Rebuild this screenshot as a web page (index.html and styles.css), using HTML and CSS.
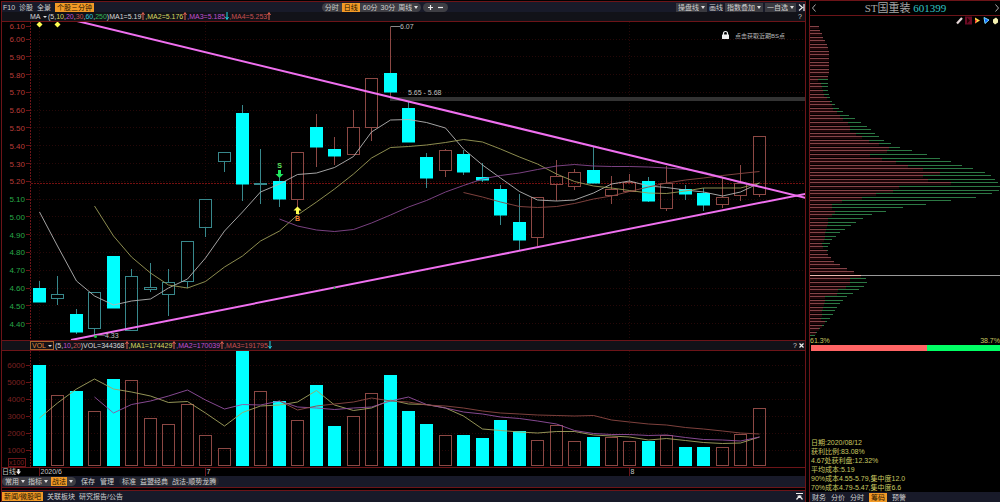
FILE: index.html
```html
<!DOCTYPE html>
<html lang="zh-CN">
<head>
<meta charset="utf-8">
<meta name="viewport" content="width=device-width, initial-scale=1">
<title>ST国重装 601399</title>
<link rel="stylesheet" href="styles.css">
</head>
<body>
<div class="app">
  <main class="panel">
    <nav class="bar top-bar">
      <div class="group links">
        <button class="flat">F10</button>
        <button class="flat">诊股</button>
        <button class="flat">全景</button>
        <button class="tag">个股三分钟</button>
      </div>
      <div class="group center">
        <div class="pill">
          <button class="flat">分时</button>
          <button class="tag">日线</button>
          <button class="flat">60分</button>
          <button class="flat">30分</button>
          <span class="drop"><select aria-label="周期"><option>周线</option></select></span>
        </div>
        <div class="pill zoom">
          <button class="flat" aria-label="放大"><svg class="sign" viewBox="0 0 5 5"><path d="M0 2.5H5M2.5 0V5"/></svg></button>
          <button class="flat" aria-label="缩小"><svg class="sign" viewBox="0 0 5 5"><path d="M0 2.5H5"/></svg></button>
        </div>
      </div>
      <div class="group tools">
        <span class="drop boxed"><select aria-label="操盘线"><option>操盘线</option></select></span>
        <button class="flat">画线</button>
        <span class="drop boxed"><select aria-label="指数叠加"><option>指数叠加</option></select></span>
        <span class="drop boxed"><select aria-label="自选"><option>一自选</option></select></span>
        <button class="flat" aria-label="收起"><svg class="skip" viewBox="0 0 7 7"><path d="M1 .5L4.500 3.500L1 6.500M6 0V7"/></svg></button>
      </div>
    </nav>
    <div class="bar legend">
      <div class="group values">
        <span class="drop white"><select aria-label="均线"><option>MA</option></select></span>
        <span class="white">(5,<i class="yellow">10</i>,<i class="purple">20</i>,<i class="red">30</i>,<i class="cyan">60</i>,<i class="green">250</i>)</span>
        <span class="white">MA1=5.19<svg class="arrow up" viewBox="0 0 4 8"><path d="M2 8V1M.5 3L2 .5L3.500 3"/></svg></span>
        <span class="yellow">,MA2=5.176<svg class="arrow up" viewBox="0 0 4 8"><path d="M2 8V1M.5 3L2 .5L3.500 3"/></svg></span>
        <span class="purple">,MA3=5.185<svg class="arrow down" viewBox="0 0 4 8"><path d="M2 0V7M.5 5L2 7.500L3.500 5"/></svg></span>
        <span class="red">,MA4=5.253<svg class="arrow up" viewBox="0 0 4 8"><path d="M2 8V1M.5 3L2 .5L3.500 3"/></svg></span>
      </div>
      <button class="flat help">?</button>
    </div>
    <svg class="chart" id="price" viewBox="2 22 803 318" role="img" aria-label="日K线图"></svg>
    <div class="bar legend volume-legend">
      <div class="group values">
        <span class="drop indicator"><select aria-label="副图指标"><option>VOL</option></select></span>
        <span class="white">(5,<i class="purple">10</i>,<i class="red">20</i>)</span>
        <span class="white">VOL=344368<svg class="arrow up" viewBox="0 0 4 8"><path d="M2 8V1M.5 3L2 .5L3.500 3"/></svg></span>
        <span class="yellow">,MA1=174429<svg class="arrow up" viewBox="0 0 4 8"><path d="M2 8V1M.5 3L2 .5L3.500 3"/></svg></span>
        <span class="purple">,MA2=170039<svg class="arrow up" viewBox="0 0 4 8"><path d="M2 8V1M.5 3L2 .5L3.500 3"/></svg></span>
        <span class="red">,MA3=191795<svg class="arrow down" viewBox="0 0 4 8"><path d="M2 0V7M.5 5L2 7.500L3.500 5"/></svg></span>
      </div>
      <div class="group">
        <button class="flat help">?</button>
        <button class="flat" aria-label="关闭"><svg class="sign" viewBox="0 0 5 5"><path d="M.5 .5L4.500 4.500M4.500 .5L.5 4.500"/></svg></button>
      </div>
    </div>
    <svg class="chart" id="volume" viewBox="2 351 803 125" role="img" aria-label="成交量"></svg>
    <div class="bar bottom-bar">
      <div class="pill">
        <span class="drop"><select aria-label="常用"><option>常用</option></select></span>
        <span class="drop"><select aria-label="指标"><option>指标</option></select></span>
        <span class="drop tagged"><select aria-label="战法"><option>战法</option></select></span>
      </div>
      <button class="flat">保存</button>
      <button class="flat">管理</button>
      <div class="pill outline">
        <button class="flat">标准</button>
        <button class="flat">益盟经典</button>
        <button class="flat">战法-顺势龙腾</button>
      </div>
    </div>
    <div class="bar news-bar">
      <div class="group">
        <button class="tag">新闻/微股吧</button>
        <button class="flat">关联板块</button>
        <button class="flat">研究报告/公告</button>
      </div>
      <button class="flat" aria-label="展开"><svg class="skip" viewBox="0 0 7 7"><path d="M0 .5H7M.5 6.500L3.500 3L6.500 6.500M3.500 3H1.500M3.500 3H5.500"/></svg></button>
    </div>
  </main>

  <aside class="side">
    <header class="side-head">
      <button class="flat" aria-label="上一只"><svg class="chevron" viewBox="0 0 4 8"><path d="M3.500 .5L.5 4L3.500 7.500"/></svg></button>
      <h1 class="stock">ST国重装 <span class="code">601399</span></h1>
      <button class="flat" aria-label="下一只"><svg class="chevron" viewBox="0 0 4 8"><path d="M.5 .5L3.500 4L.5 7.500"/></svg></button>
    </header>
    <div class="side-tools">
      <svg viewBox="0 0 7 8"><path d="M1 7L6 1.500" stroke="#e8d8d8" stroke-width="2.200"/></svg>
      <svg viewBox="0 0 7 8"><path d="M0 0H7V8H0z" fill="#6a0a24"/><path d="M2 1V7L5 4z" fill="#200"/></svg>
      <svg viewBox="0 0 7 8"><path d="M1 1L6 4L1 7z" fill="#ffd84a"/><path d="M1 3L3 4L1 7z" fill="#f33"/></svg>
      <svg viewBox="0 0 7 8"><path d="M1 1L6 3.500L2 7z" fill="#16f" stroke="#7df"/></svg>
      <svg viewBox="0 0 7 8"><path d="M1 3L4 1L6 3V6L3 8L1 6z" fill="#f4f0b0"/></svg>
    </div>
    <svg class="chart" id="chips" viewBox="810 25 190 312" role="img" aria-label="筹码分布"></svg>
    <div class="ratio-text"><span>61.3%</span><span>38.7%</span></div>
    <div class="ratio"><div class="ratio-red"></div><div class="ratio-green"></div></div>
    <div class="stats">
      <p>日期:2020/08/12</p>
      <p>获利比例:83.08%</p>
      <p>4.67处获利盘:12.32%</p>
      <p>平均成本:5.19</p>
      <p>90%成本4.55-5.79,集中度12.0</p>
      <p>70%成本4.79-5.47,集中度6.6</p>
    </div>
    <nav class="bar side-tabs">
      <button class="flat">财务</button>
      <button class="flat">分价</button>
      <button class="flat">分时</button>
      <button class="tag">筹码</button>
      <button class="flat">预警</button>
    </nav>
  </aside>
</div>
<script src="charts.js"></script>
</body>
</html>
```
FILE: styles.css
```css
* { box-sizing: border-box; }

body {
  margin: 0;
  background: #000;
  color: #d0d0d0;
  font-family: "Liberation Sans", "Noto Sans CJK SC", sans-serif;
  font-size: 7px;
  line-height: 9px;
}

button, select {
  margin: 0;
  padding: 0;
  border: 0;
  border-radius: 0;
  background: none;
  color: inherit;
  font: inherit;
  white-space: nowrap;
}

select { appearance: none; }
option { color: #000; }
i { font-style: normal; }
svg { display: block; }

.app {
  display: grid;
  grid-template-columns: minmax(0, 1fr) 191px;
  column-gap: 3px;
  min-height: 100vh;
  padding-left: 1px;
}

.panel {
  display: flex;
  flex-direction: column;
  margin-top: 1px;
  border: 1px solid #6c1418;
  border-bottom: 0;
}

.chart { width: 100%; height: auto; }

.bar {
  display: flex;
  align-items: center;
  justify-content: space-between;
  background: #181a29;
}

.group { display: flex; align-items: center; }
.top-bar { height: 10px; }
.links { gap: 4px; padding-left: 1px; }
.center { gap: 2px; }
.tools { gap: 2px; }

.tag {
  padding: 0 2px;
  background: #f29a26;
  color: #241200;
}

.pill {
  display: flex;
  align-items: center;
  gap: 3px;
  padding: 0 3px;
  border-radius: 5px;
  background: #3e3e44;
}

.zoom { gap: 5px; height: 9px; padding: 0 5px; }
.outline { background: #24262f; border-radius: 5px; gap: 4px; }

.drop { display: inline-flex; align-items: center; gap: 2px; }
.drop::after {
  content: "";
  border: 2px solid transparent;
  border-top: 3px solid #ddd;
  border-bottom: 0;
}
.boxed { padding: 0 2px; background: #3a3a40; }
.tagged select { padding: 0 1px; background: #f29a26; color: #241200; }

.sign { width: 5px; height: 5px; fill: none; stroke: #eee; stroke-width: 1.2; }
.skip { width: 7px; height: 7px; fill: none; stroke: #eee; stroke-width: 1.2; }
.chevron { width: 4px; height: 8px; fill: none; stroke: #aaa; }
.arrow { display: inline-block; width: 4px; height: 8px; fill: none; vertical-align: -1px; }
.up { stroke: #e06050; }
.down { stroke: #20d8e8; }

.legend {
  height: 10px;
  padding: 0 1px 0 28px;
  border-bottom: 1px solid #6c1418;
  background: #121218;
}
.volume-legend { height: 11px; border-top: 1px solid #6c1418; }
.values { white-space: nowrap; }
.values .drop { margin-right: 1px; }
.values .drop::after { border-top-width: 2px; }
.help { margin-right: 2px; }
.indicator { gap: 1px; padding: 0 1px; border: 1px solid #a8642c; color: #e08a3a; line-height: 7px; }

.white { color: #d8d8d8; }
.yellow { color: #d8d860; }
.purple { color: #c050d0; }
.red { color: #c85050; }
.cyan { color: #30c8d8; }
.green { color: #30b858; }

.bottom-bar {
  height: 12px;
  justify-content: flex-start;
  gap: 5px;
  padding-bottom: 1px;
  border-bottom: 1px solid #6c1418;
}

.news-bar {
  flex: 1;
  margin-top: 2px;
  padding-right: 2px;
  border-top: 1px solid #6c1418;
}
.news-bar .group { gap: 4px; }

.side {
  display: flex;
  flex-direction: column;
  border-top: 1px solid #6c1418;
  border-left: 1px solid #6c1418;
}

.side-head {
  display: flex;
  align-items: center;
  justify-content: space-between;
  height: 15px;
  padding: 0 1px 0 2px;
  border-bottom: 1px solid #6c1418;
}

.stock {
  margin: 0;
  color: #a8a8a8;
  font: 11px/14px "Liberation Serif", "Noto Sans CJK SC", serif;
}
.code { color: #30c4c4; }

.side-tools {
  display: flex;
  justify-content: flex-end;
  gap: 2px;
  padding-right: 1px;
}
.side-tools svg { width: 7px; height: 9px; fill: none; }

.ratio-text {
  display: flex;
  justify-content: space-between;
  line-height: 7px;
  color: #c8c860;
}

.ratio { display: flex; height: 6px; margin: 1px 0 0 1px; }
.ratio-red { flex: 613; background: #ff6464; }
.ratio-green { flex: 387; background: #00ff64; }

.stats { margin: auto 0 0 1px; color: #c8c860; white-space: nowrap; }
.stats p { margin: 0; }

.side-tabs {
  justify-content: flex-start;
  gap: 5px;
  height: 10px;
  padding-left: 2px;
}

.num { font: 8px "Liberation Sans", sans-serif; text-anchor: end; }
.axis-red { fill: #b83c38; }
.axis-green { fill: #28a848; }
.axis-dark { fill: #7c2020; }
.unit { fill: #7c2020; font-size: 7px; }
.note { fill: #c0c0c0; font-size: 7px; }
.hint { fill: #b8b8b8; font-size: 6px; }
.date { fill: #c8c8c8; font-size: 7px; }
.mark { font-size: 7px; font-weight: bold; text-anchor: middle; }
```
FILE: charts.js
```js
const NS = "http://www.w3.org/2000/svg";
const price = document.getElementById("price");
const volume = document.getElementById("volume");
const chips = document.getElementById("chips");

function add(svg, name, attrs, text) {
  const el = document.createElementNS(NS, name);
  for (const key in attrs) el.setAttribute(key, attrs[key]);
  if (text) el.textContent = text;
  svg.append(el);
  return el;
}

const line = (svg, x1, y1, x2, y2, stroke, extra) =>
  add(svg, "line", { x1, y1, x2, y2, stroke, ...extra });
const rect = (svg, x, y, width, height, attrs) =>
  add(svg, "rect", { x, y, width, height, ...attrs });
const center = i => Math.round(39 + i * 18.45) + 0.5;
const curve = (svg, start, ys, stroke) =>
  add(svg, "polyline", {
    points: ys.map((y, k) => center(start + k) + "," + y).join(" "),
    fill: "none", stroke, "stroke-width": 0.9
  });

const CYAN = "#00ffff", TEAL = "#38888c", RED = "#8c4844", AXIS = "#6c1418", GRID = "#260808";
const crisp = { "shape-rendering": "crispEdges" };
const dots = { "stroke-dasharray": "1 2", ...crisp };

/* price axis and grid */
line(price, 30.5, 22, 30.5, 340, AXIS, { "stroke-dasharray": "2 1", ...crisp });
for (let k = 0; k <= 17; k++) {
  const p = 6.1 - k * 0.1;
  const y = k === 0 ? 26 : 39 + (k - 1) * 17.79;
  add(price, "text", { x: 25, y: y + 3, class: "num " + (p > 5.15 ? "axis-red" : "axis-green") }, p.toFixed(2));
  line(price, 26, y, 30, y, AXIS, crisp);
  if (k) line(price, 31, y, 805, y, GRID, dots);
}
for (const x of [39.5, 205.5, 629.5]) {
  line(price, x, 22, x, 340, GRID, dots);
  line(volume, x, 351, x, 467, GRID, dots);
}
line(price, 31, 183.5, 805, 183.5, "#741010", { "stroke-dasharray": "2 1", ...crisp });

/* price gap band */
rect(price, 390, 97, 415, 4, { fill: "#333" });

/* candles: kind, body top, body bottom, high, low */
const candles = [
  ["f",288,302,281,302],["c",294,298,276,305],["f",314,332,309,334],["c",292,328,292,337],
  ["f",256,308,256,308],["c",276,330,269,331],["c",287,289,263,292],["c",282,294,269,316],
  ["c",241,281,241,288],["c",199,227,199,237],["c",152,161,152,172],["f",113,184,105,201],
  ["c",183,184,149,204],["f",181,199,177,207],["r",152,199,152,210],["m",127,147,114,167],
  ["m",149,156,137,165],["r",127,154,110,154],["r",78,127,78,141],["m",73,92,27,97],
  ["f",108,142,102,142],["f",157,178,153,188],["r",150,170,149,177],["f",154,172,150,175],
  ["f",177,180,163,182],["f",189,215,185,225],["f",222,240,194,250],["r",197,237,197,246],
  ["r",176,184,160,201],["r",172,186,169,190],["f",170,183,147,183],["r",189,195,176,204],
  ["r",182,191,174,192],["f",181,201,177,202],["r",183,208,166,211],["f",189,194,185,200],
  ["f",193,205,188,211],["r",197,204,178,208],["r",183,195,165,201],["r",136,194,136,197]
];
candles.forEach(([kind, top, bottom, high, low], i) => {
  const x = center(i);
  const color = kind === "r" || kind === "m" ? RED : TEAL;
  if (high < top) line(price, x, high, x, top, color, crisp);
  if (low > bottom) line(price, x, bottom, x, low, color, crisp);
  if (kind === "f" || kind === "m") rect(price, x - 6.5, top, 13, bottom - top + 0.5, { fill: CYAN });
  else rect(price, x - 6, top + 0.5, 12, bottom - top, { fill: "none", stroke: color });
});

/* moving averages */
curve(price, 0, [212,246,281,296,305,301,299,288,279,258,231,212,192,184,174.5,173,167.5,156.5,132,120,119.5,122.5,128,149,165,178,191.5,200,201,200,193,184,181,186,187.5,190,192,196,192,183], "#b4b4b4");
curve(price, 3, [206,236,257,273,285,288,281.5,267,256,241,231,215,202,189,174,158,147.5,146.5,145,142.5,139.5,142,149,157,164,174,181.5,186,188,190.5,193,193.5,191,188,188,188,183], "#9c9c58");
curve(price, 13, [219,226,230,231.5,229.5,223,215,207,200.5,192,185.5,179,175.5,173,169.5,166,164.5,166,166.5,166.5,167,168,169.5,172,177,183,187], "#884890");
curve(price, 23, [192.5,197,202,206.5,207.5,206.5,203.5,199,196,191.5,187,183,180,178,175.5,173.5,171.5], "#8c4844");

/* trend lines */
const TREND = { "stroke-width": 2 };
line(price, 77, 21, 806, 198, "#f070f0", TREND);
line(price, 71, 340, 806, 193.7, "#f070f0", TREND);

/* markers and notes */
for (const x of [39.5, 57.5]) add(price, "path", { d: `M${x} 21.500L${x + 3} 24.500L${x} 27.500L${x - 3} 24.500z`, fill: "#ffff50" });
line(price, 390.5, 26.5, 400, 26.5, "#888");
add(price, "text", { x: 400, y: 29, class: "note" }, "6.07");
add(price, "text", { x: 408, y: 95, class: "note" }, "5.65 - 5.68");
line(price, 96, 335.5, 105, 335.5, "#555");
add(price, "text", { x: 105, y: 338, class: "note" }, "4.33");
add(price, "circle", { cx: 95.5, cy: 336.5, r: 1.5, fill: "#20c040" });
add(price, "circle", { cx: 334.5, cy: 288, r: 1, fill: "#20c040" });
add(price, "text", { x: 279.5, y: 168, class: "mark", fill: "#60e860" }, "S");
add(price, "path", { d: "M278 170H281V174H283.500L279.500 178L275.500 174H278z", fill: "#20e860" });
add(price, "path", { d: "M296 214H299V210.500H301.500L297.500 206.500L293.500 210.500H296z", fill: "#ffff50" });
add(price, "text", { x: 297.5, y: 221, class: "mark", fill: "#f08030" }, "B");
add(price, "path", { d: "M723.500 35V33.500A2 2 0 0 1 727.500 33.500V35", fill: "none", stroke: "#eee", "stroke-width": 1.2 });
rect(price, 722, 34.5, 7, 4.5, { fill: "#eee", rx: 0.5 });
add(price, "text", { x: 735, y: 38, class: "hint" }, "点击获取近期BS点");

/* volume axis */
line(volume, 30.5, 351, 30.5, 467, AXIS, { "stroke-dasharray": "2 1", ...crisp });
for (let k = 0; k < 6; k++) {
  const y = 365 + k * 17;
  add(volume, "text", { x: 25, y: y + 3, class: "num axis-dark" }, String(6000 - k * 1000));
  line(volume, 26, y, 30, y, AXIS, crisp);
  line(volume, 31, y, 805, y, GRID, dots);
}
rect(volume, 8.5, 458.5, 17, 8, { fill: "none", stroke: AXIS });
add(volume, "text", { x: 9, y: 465, class: "unit" }, "x100");
line(volume, 2, 467.5, 805, 467.5, AXIS, crisp);

/* volume bars: top edge of each bar, "f" falling or "r" rising */
const tops = [365,395,391,411,379,380,418,424,404,435,448,350,391,401,420,385,426,416,393,375,411,424,435,435,438,420,431,440,425,441,437,437,441,441,435,447,447,447,434,408];
const kinds = "frfrfrrrrrrfrfrffrrfffrffffrrrfrrfrffrrr";
tops.forEach((top, i) => {
  const x = center(i);
  if (kinds[i] === "f") rect(volume, x - 6.5, top, 13, 466 - top, { fill: CYAN });
  else rect(volume, x - 6, top + 0.5, 12, 465 - top, { fill: "none", stroke: RED });
});
curve(volume, 0, [418,403,389,379,389,392,396,402.5,401.5,413,426,412.5,406,405,402,390.5,405,410.5,408,400,404,404.5,408,416,429,430.5,432,433,431.5,431.5,435,436,437,440,438.5,440.5,442.5,443.5,443,437], "#a4a460");
curve(volume, 3, [397,413,404.5,401,396,390,400,409,404.5,405,401,407,408,409.5,408,407,401,397,404.5,408,412,414,417,418.5,421,424,430.5,433.5,434.5,434.5,435.5,435,437.5,439.5,440,441,437], "#9450a0");
curve(volume, 13, [401,410,406,404,402,398,401,402,405,406,408,411,413,414,415,415.5,416,415.5,420,422,424,425,427.5,429,431,433,434], "#8c4844");

/* date row */
add(volume, "text", { x: 2, y: 474, class: "date" }, "日线");
add(volume, "path", { d: "M17.500 469H19.500V471.500H21L18.500 474.500L16 471.500H17.500z", fill: "#eee" });
for (const [x, label] of [[39.5, "2020/6"], [205.5, "7"], [629.5, "8"]]) {
  line(volume, x, 468, x, 476, AXIS, crisp);
  add(volume, "text", { x: x + 1, y: 474, class: "date" }, label);
}

/* chip distribution: total width and profitable part of each price row */
const total = [9,10,12,13,15,17,18,19,19,19,19,19,19,19,18,18,18,18,18,19,20,22,25,29,33,39,45,51,57,61,65,69,74,81,90,102,117,130,141,152,163,175,181,185,188,190,189,182,166,141,116,93,76,62,53,46,41,35,30,26,22,20,18,18,18,21,24,30,37,44,51,56,57,54,49,43,37,33,30,27,25,23,20,17,14,10,7,5];
const profit = [9,10,12,13,15,17,18,19,19,19,19,19,19,19,18,8,11,12,13,14,17,20,22,23,27,30,33,38,40,40,46,52,59,69,79,77,60,72,86,98,113,130,113,118,141,89,83,66,52,32,22,22,25,22,18,18,17,16,15,15,14,12,13,17,18,21,24,30,37,44,51,40,40,36,28,27,15,15,14,13,12,12,11,15,12,9,6,0];
total.forEach((width, i) => {
  const y = Math.round(26 + i * 3.555);
  rect(chips, 810, y, profit[i], 3, { fill: "#1c0508" });
  rect(chips, 810, y, width, 1, { fill: "#2c7844" });
  rect(chips, 810, y, profit[i], 1, { fill: "#844448" });
  if (i === 70) {
    rect(chips, 810, y, 190, 1, { fill: "#999" });
    rect(chips, 810, y, width, 1, { fill: "#f0b8b0" });
  }
});
```
